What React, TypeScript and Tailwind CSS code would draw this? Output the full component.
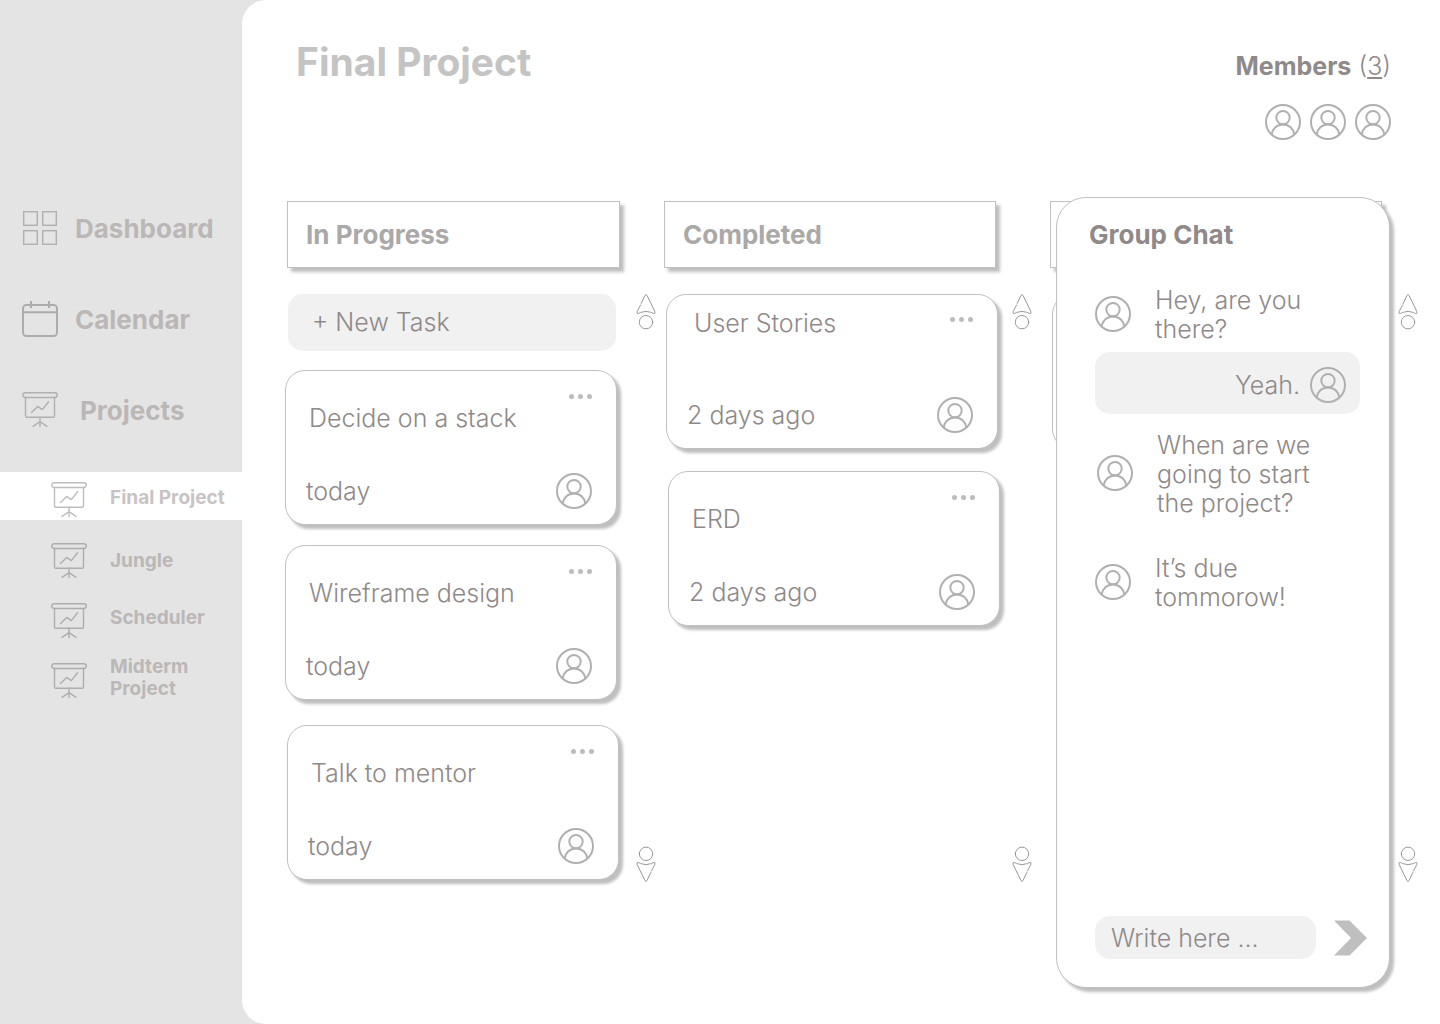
import { useState } from "react";
import type { ReactNode } from "react";

function Avatar() {
  return (
    <svg viewBox="0 0 36 36" className="size-9 shrink-0 text-[#b0b0b0]" fill="none" stroke="currentColor" strokeWidth="2" aria-hidden="true">
      <circle cx="18" cy="18" r="17" />
      <circle cx="18" cy="13.6" r="6.7" />
      <path d="M6.6 30.6C7.4 24.6 12 20.4 18 20.4S28.6 24.6 29.4 30.6" />
    </svg>
  );
}

function BoardIcon() {
  return (
    <svg viewBox="0 0 36 36" className="size-9 shrink-0" fill="none" stroke="currentColor" strokeWidth="1.4" strokeLinecap="round" strokeLinejoin="round" aria-hidden="true">
      <rect x="0.7" y="0.7" width="34.6" height="4.8" rx="2.4" />
      <path d="M3.5 5.5V24a1.3 1.3 0 0 0 1.3 1.3H31.2A1.3 1.3 0 0 0 32.5 24V5.5" />
      <path d="M9.5 20.5 15.7 14.4 20.3 17.6 26.6 9.8M18 25.3V34.6M18 29.6 11 34.3M18 29.6 25 34.3" />
    </svg>
  );
}

function GridIcon() {
  return (
    <svg viewBox="0 0 36 36" className="size-9 shrink-0" fill="none" stroke="currentColor" strokeWidth="1.4" aria-hidden="true">
      <rect x="1.7" y="1.7" width="13.6" height="13.6" />
      <rect x="20.7" y="1.7" width="13.6" height="13.6" />
      <rect x="1.7" y="20.7" width="13.6" height="13.6" />
      <rect x="20.7" y="20.7" width="13.6" height="13.6" />
    </svg>
  );
}

function CalendarIcon() {
  return (
    <svg viewBox="0 0 36 36" className="size-9 shrink-0" fill="none" stroke="currentColor" strokeWidth="2" aria-hidden="true">
      <rect x="1" y="4" width="34" height="31" rx="3.5" />
      <path d="M1 11.3H35M9 0V7M27 0V7" />
    </svg>
  );
}

function ScrollIcon() {
  return (
    <svg viewBox="0 0 20 36" className="h-9 w-5" fill="none" stroke="#8c8c8c" strokeWidth="0.9" strokeLinecap="round" aria-hidden="true">
      <path d="M5.2 9.4 9 1.4Q10 -0.4 11 1.4L18.9 17.6Q19.6 19.9 17.6 19.5L15.6 18.6" />
      <path d="M4.6 11 1.1 17.6Q0.4 19.9 2.4 19.5L4.4 18.6M5.4 18.2Q10 16.4 14.6 18.2" />
      <circle cx="10" cy="28.2" r="6.7" />
    </svg>
  );
}

function Scroller() {
  return (
    <div className="flex h-[588px] w-5 shrink-0 flex-col justify-between">
      <button type="button" aria-label="Scroll up">
        <ScrollIcon />
      </button>
      <button type="button" aria-label="Scroll down" className="rotate-180">
        <ScrollIcon />
      </button>
    </div>
  );
}

type Task = { title?: string; age?: string; raised?: boolean; place?: string };

function TaskCard({ title, age, raised, place = "" }: Task) {
  return (
    <article className={`flex h-[155px] flex-col rounded-[20px] border border-[#c0c0c0] bg-white pr-6 pb-[15px] pl-5 shadow-[4px_4px_3px_#bfbfbf] ${place}`}>
      <div className={raised ? "flex flex-row-reverse items-start justify-between pt-[14px]" : "flex flex-col pt-[19px]"}>
        <button type="button" aria-label="Task options" className={`flex gap-1 self-start ${raised ? "pt-1" : "ml-auto"}`}>
          <span className="my-1 size-[5px] rounded-full bg-[#bcbcbc]" />
          <span className="my-1 size-[5px] rounded-full bg-[#bcbcbc]" />
          <span className="my-1 size-[5px] rounded-full bg-[#bcbcbc]" />
        </button>
        {title && <h3 className={raised ? "pl-[7px]" : "pt-px pl-[3px]"}>{title}</h3>}
      </div>
      <div className="mt-auto flex items-center justify-between">
        <span>{age}</span>
        <Avatar />
      </div>
    </article>
  );
}

function Column({ title, place, indent = "", children }: { title?: string; place: string; indent?: string; children: ReactNode }) {
  return (
    <section className={`flex flex-col gap-[26px] ${place}`}>
      <div className={`mr-9 flex h-[67px] items-center border border-[#c0c0c0] bg-white pl-[18px] shadow-[4px_4px_3px_#bfbfbf] ${indent}`}>
        {title && <h2 className="text-[26px] font-bold text-[#aba8a8]">{title}</h2>}
      </div>
      <div className="flex justify-between">
        <div className="flex min-w-0 flex-1 flex-col">{children}</div>
        <Scroller />
      </div>
    </section>
  );
}

function Message({ children, place = "" }: { children: string; place?: string }) {
  return (
    <li className={`flex items-center gap-6 ${place}`}>
      <span className="pb-[3px]"><Avatar /></span>
      <p className="w-[176px]">{children}</p>
    </li>
  );
}

const projects = ["Final Project", "Jungle", "Scheduler", "Midterm Project"];

export default function App() {
  const [draft, setDraft] = useState("");
  return (
    <div className="flex min-h-screen bg-[#e4e4e4] font-['Inter',sans-serif] text-[25px] leading-[29px] font-light text-[#8f8989]">
      <nav className="w-[242px] shrink-0 pt-[210px] font-bold text-[#bcb7b7]">
        <ul className="flex flex-col gap-[55px] pl-[22px] text-[26px]">
          <li>
            <a href="#dashboard" className="flex items-center gap-[17px]">
              <span className="text-[#b0b0b0]"><GridIcon /></span>
              Dashboard
            </a>
          </li>
          <li>
            <a href="#calendar" className="flex items-center gap-[17px]">
              <span className="text-[#acacac]"><CalendarIcon /></span>
              Calendar
            </a>
          </li>
          <li>
            <a href="#projects" className="flex items-center gap-[22px]">
              <span className="text-[#b0b0b0]"><BoardIcon /></span>
              Projects
            </a>
          </li>
        </ul>
        <ul className="mt-11 text-[19px] leading-[22px]">
          {projects.map((name, i) => (
            <li key={name}>
              <a
                href="#project"
                className={
                  i === 0
                    ? "mb-[11px] flex h-12 items-center gap-[23px] bg-white pt-1 pl-[51px] whitespace-nowrap text-[#c8c4c4]"
                    : "flex h-[60px] items-center gap-[23px] pr-8 pl-[51px]"
                }
              >
                <span className={i === 0 ? "pt-1 text-[#bdbdbd]" : "text-[#adadad]"}><BoardIcon /></span>
                <span className={i > 1 ? "pb-[6px]" : ""}>{name}</span>
              </a>
            </li>
          ))}
        </ul>
      </nav>

      <main className="relative min-w-0 flex-1 rounded-l-3xl bg-white pt-10 pr-[22px] pb-[142px] pl-[43px]">
        <header className="flex h-[161px] items-start justify-between pr-[27px] pl-[11px]">
          <h1 className="text-[39px] leading-[43px] font-bold text-[#c4c4c4]">Final Project</h1>
          <div className="flex flex-col items-end gap-[23px] pt-3">
            <p>
              <strong className="font-bold">Members</strong> (<a href="#members" className="underline">3</a>)
            </p>
            <div className="flex gap-[9px]">
              <Avatar />
              <Avatar />
              <Avatar />
            </div>
          </div>
        </header>

        <div className="grid grid-cols-[379fr_386fr_368fr]">
          <Column title="In Progress" place="pr-2" indent="ml-0.5">
            <div className="pr-[19px]">
              <button type="button" className="ml-[3px] flex h-[57px] w-[328px] max-w-full items-center rounded-[15px] bg-[#f1f1f1] pl-6">
                + New Task
              </button>
              <div className="mt-[19px] flex flex-col">
                <TaskCard title="Decide on a stack" age="today" />
                <TaskCard title="Wireframe design" age="today" place="mt-5" />
                <TaskCard title="Talk to mentor" age="today" place="mt-[25px] ml-0.5 -mr-0.5" />
              </div>
            </div>
          </Column>
          <Column title="Completed" place="pr-[18px]">
            <div className="flex flex-col gap-[22px] pr-3.5 pl-0.5">
              <TaskCard title="User Stories" age="2 days ago" raised />
              <TaskCard title="ERD" age="2 days ago" place="ml-0.5 -mr-0.5" />
            </div>
          </Column>
          <Column place="">
            <div className="pr-3.5 pl-0.5">
              <TaskCard />
            </div>
          </Column>
        </div>

        <aside className="absolute top-[197px] right-[50px] bottom-9 flex w-[334px] flex-col rounded-[30px] border border-[#c0c0c0] bg-white pt-[22px] pr-[22px] pb-7 pl-[38px] shadow-[4px_4px_3px_#bfbfbf]">
          <h2 className="-ml-[6px] text-[26px] font-bold">Group Chat</h2>
          <ul className="mt-[37px]">
            <Message>Hey, are you there?</Message>
            <li className="mt-2 mr-[7px] flex h-[62px] items-center justify-end gap-2.5 rounded-[15px] bg-[#f1f1f1] pt-1 pr-3.5">
              <p>Yeah.</p>
              <Avatar />
            </li>
            <Message place="mt-[17px] ml-0.5">When are we going to start the project?</Message>
            <Message place="mt-9">It’s due tommorow!</Message>
          </ul>
          <form className="mt-auto flex items-center gap-[18px]" onSubmit={(e) => e.preventDefault()}>
            <input
              aria-label="Message"
              placeholder="Write here ..."
              value={draft}
              onChange={(e) => setDraft(e.target.value)}
              className="h-[43px] w-[221px] min-w-0 rounded-[15px] bg-[#f1f1f1] px-4 outline-none placeholder:text-[#8f8989]"
            />
            <button type="submit" aria-label="Send">
              <svg viewBox="0 0 33 36" className="h-9 w-[33px]" fill="#bfbfbf" aria-hidden="true">
                <path d="M0 0.5H15.5L33 18 15.5 35.5H0L17 18Z" />
              </svg>
            </button>
          </form>
        </aside>
      </main>
    </div>
  );
}
